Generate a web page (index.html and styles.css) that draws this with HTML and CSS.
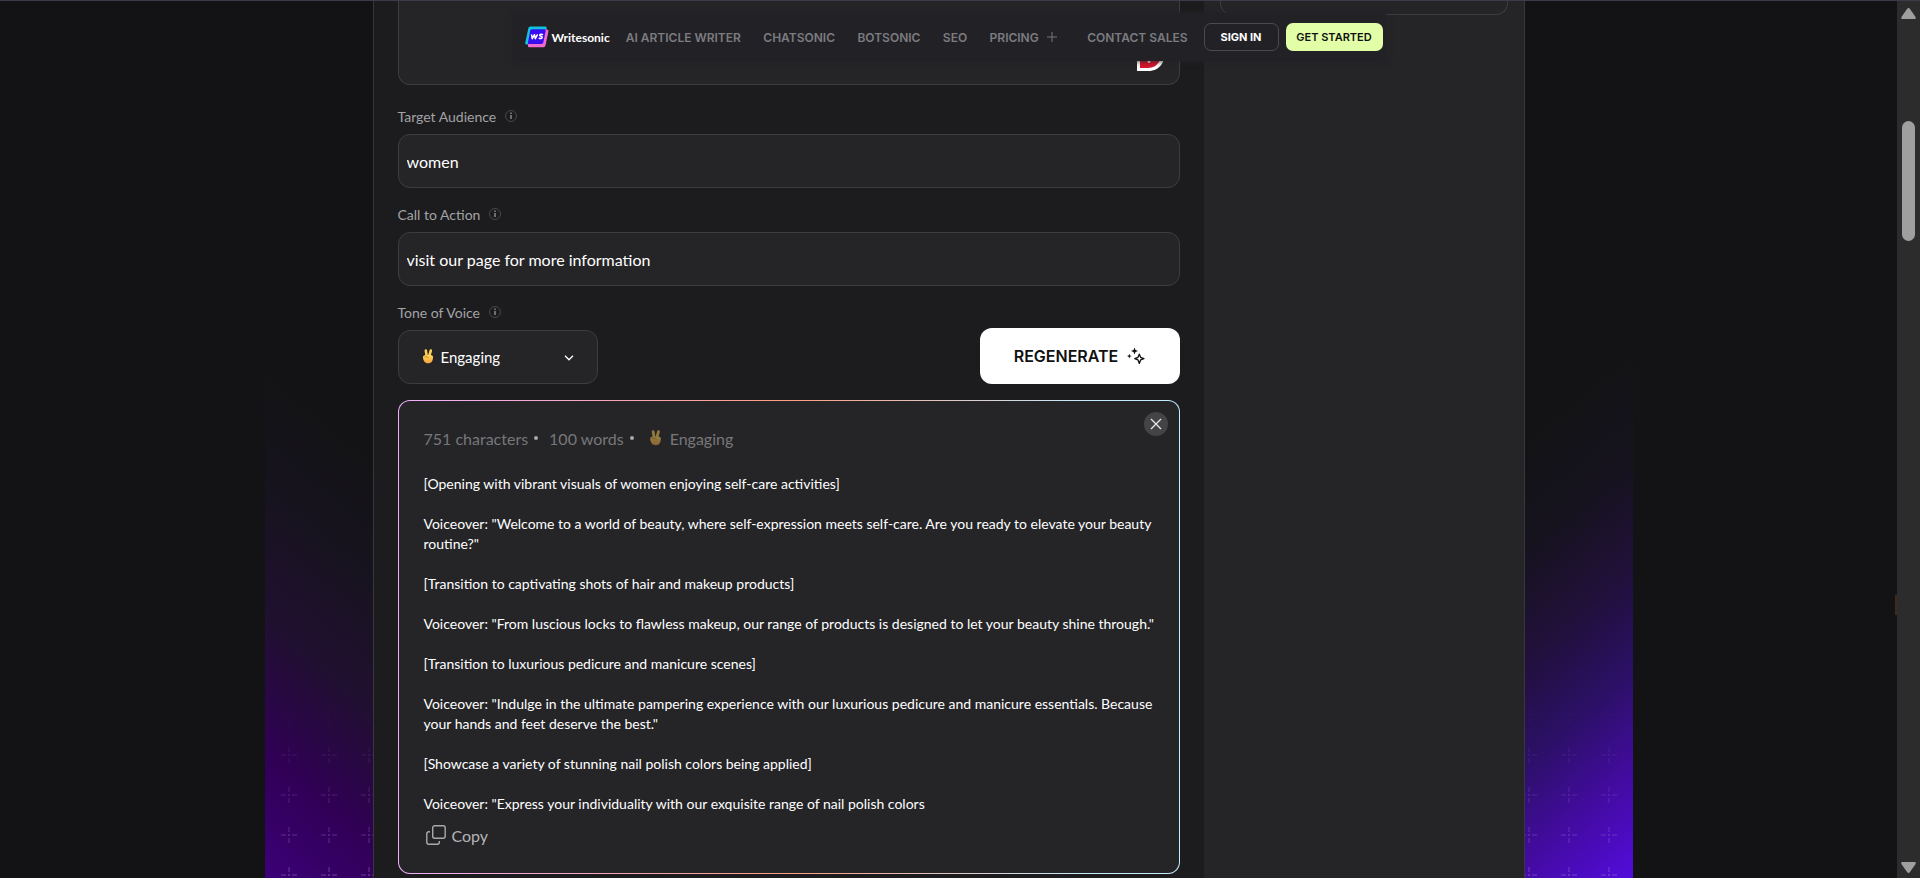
FILE: index.html
```html
<!DOCTYPE html>
<html lang="en">
<head>
<meta charset="utf-8">
<meta name="viewport" content="width=device-width, initial-scale=1">
<title>Writesonic</title>
<link rel="stylesheet" href="styles.css">
</head>
<body>
<svg class="defs" width="0" height="0" aria-hidden="true">
  <defs>
    <linearGradient id="skin" x1="0" y1="0" x2="0" y2="1"><stop offset="0" stop-color="#ffdc5c"/><stop offset="1" stop-color="#f7a03c"/></linearGradient>
    <symbol id="victory" viewBox="0 0 12 15">
      <path d="M3.800 1.600 4.800 7.400M8.800 1.600 7.200 7.400" stroke="#ffcf55" stroke-width="2.600" stroke-linecap="round" fill="none"/>
      <path d="M1 8.500C.8 7 2 6 3.200 6.300H9.500c1.300.2 1.700 1.400 1.500 2.700-.3 2.800-1.400 5.300-4.600 5.300C3 14.300 1.300 12 1 8.500Z" fill="url(#skin)"/>
      <path d="M2 8.300c1.500-.9 3.600-.6 5 .7M4.200 6.800l.6 1.500" stroke="#d27f22" stroke-width=".7" fill="none"/>
    </symbol>
    <symbol id="info" viewBox="0 0 12 12">
      <circle cx="6" cy="6" r="5.500" fill="none" stroke="#48484b"/>
      <path d="M6 5v4M6 2.600v1.300" stroke="#a5a5a8" stroke-width="1.200"/>
    </symbol>
  </defs>
</svg>
<div class="window">
  <div class="viewport">
    <header class="nav">
      <a class="brand" href="#">
        <svg width="24" height="22" viewBox="0 0 24 22" aria-hidden="true">
          <path d="M5.200.5H20a1.600 1.600 0 0 1 1.600 2L18 15 2.500 18.500H1.800A1.600 1.600 0 0 1 .3 16.500L3.400 2A2 2 0 0 1 5.200.5Z" fill="#0fc4dc"/>
          <path d="M20 3.500h1.800A1.600 1.600 0 0 1 23.400 5.500l-3 14.200a2 2 0 0 1-1.900 1.500H4.300A1.500 1.500 0 0 1 3 19.200L3.500 17Z" fill="#f06ad0"/>
          <path d="M6.800 3.200H19.500a1.200 1.200 0 0 1 1.200 1.500L18.300 16.600a1.800 1.800 0 0 1-1.700 1.400H4.200A1.200 1.200 0 0 1 3 16.500L5.200 4.600A1.700 1.700 0 0 1 6.800 3.200Z" fill="#3a0cf0"/>
          <path d="m6.500 8.400.8 4.300 2.200-4 .8 4 2.300-4.300M18 8.800c-1.300-.8-3.300-.6-3.300.5 0 1.200 2.700.7 2.500 2.100-.2 1.300-2.200 1.400-3.400.4" fill="none" stroke="#fff" stroke-width="1.500" stroke-linejoin="round"/>
        </svg>
        <span>Writesonic</span>
      </a>
      <nav class="links">
        <a href="#">AI ARTICLE WRITER</a>
        <a href="#">CHATSONIC</a>
        <a href="#">BOTSONIC</a>
        <a href="#">SEO</a>
        <a class="pricing" href="#">PRICING
          <svg width="10" height="10" viewBox="0 0 10 10" aria-hidden="true"><path d="M5 0v10M0 5h10" stroke="#77777b"/></svg>
        </a>
        <a href="#">CONTACT SALES</a>
      </nav>
      <button class="sign-in" type="button">SIGN IN</button>
      <button class="get-started" type="button">GET STARTED</button>
    </header>

    <div class="band">
      <svg class="crosses" width="100%" height="100%" aria-hidden="true">
        <defs>
          <pattern id="cross" width="40" height="40" x="4" y="14" patternUnits="userSpaceOnUse">
            <path d="M20 12v5M20 19v2M20 23v5M12 20h5M19 20h2M23 20h5" stroke="#b58ae0" stroke-width="1"/>
          </pattern>
          <linearGradient id="fade" x1="0" y1="0" x2="0" y2="1"><stop offset=".8" stop-color="#fff" stop-opacity="0"/><stop offset="1" stop-color="#fff" stop-opacity=".42"/></linearGradient>
          <mask id="fademask"><rect width="100%" height="100%" fill="url(#fade)"/></mask>
        </defs>
        <rect width="100%" height="100%" fill="url(#cross)" mask="url(#fademask)"/>
      </svg>
      <div class="panel">
        <main class="tool">
          <div class="card-end description-card">
            <svg width="32" height="26" viewBox="0 0 32 26" aria-hidden="true">
              <path d="M1 0h30c-2 15-6 25-19 25H1Z" fill="#fff"/><path d="M4 0h24c-2 13-6 22-16 22H4Z" fill="#d8142c"/><path d="M11 14c1 4 3 4 4 0Z" fill="#fff"/>
            </svg>
          </div>

          <div class="field">
            <div class="label-row"><label for="audience">Target Audience</label><svg width="12" height="12" aria-hidden="true"><use href="#info"/></svg></div>
            <input id="audience" class="text-input" type="text" value="women">
          </div>
          <div class="field">
            <div class="label-row"><label for="cta">Call to Action</label><svg width="12" height="12" aria-hidden="true"><use href="#info"/></svg></div>
            <input id="cta" class="text-input" type="text" value="visit our page for more information">
          </div>
          <div class="actions">
            <div class="field tone">
              <div class="label-row"><label for="tone">Tone of Voice</label><svg width="12" height="12" aria-hidden="true"><use href="#info"/></svg></div>
              <div class="select-wrap">
                <svg class="hand" width="12" height="15" aria-hidden="true"><use href="#victory"/></svg>
                <select id="tone"><option>Engaging</option></select>
                <svg class="chevron" width="10" height="6" viewBox="0 0 10 6" aria-hidden="true"><path d="m1 .8 4 4 4-4" fill="none" stroke="#fff" stroke-width="1.300"/></svg>
              </div>
            </div>
            <button class="regenerate" type="button">REGENERATE
              <svg width="18" height="18" viewBox="0 0 18 18" aria-hidden="true">
                <path d="M7.500.6 8.500 3l2.500 1-2.500 1-1 2.500-1-2.500L4 4l2.500-1Z" fill="#111"/>
                <path d="m2.300 6.800.7 1.600 1.700.7-1.700.7-.7 1.600-.7-1.600L0 9.100l1.600-.7Z" fill="#111"/>
                <path d="m12.300 7.200 1.300 3.100 3.300 1.300-3.300 1.300-1.300 3.500-1.300-3.500-3.300-1.300L11 10.300Z" fill="none" stroke="#111" stroke-width="1.300" stroke-linejoin="round"/>
              </svg>
            </button>
          </div>

          <section class="output">
            <button class="close" type="button" aria-label="Close"><svg width="12" height="12" viewBox="0 0 12 12" aria-hidden="true"><path d="m1 1 10 10M11 1 1 11" stroke="#e8e8ea" stroke-width="1.300"/></svg></button>
            <div class="meta">
              <span>751 characters</span><i class="dot"></i>
              <span>100 words</span><i class="dot"></i>
              <svg class="meta-hand" width="13" height="16" aria-hidden="true"><use href="#victory"/></svg>
              <span>Engaging</span>
            </div>
            <div class="script">
              <p>[Opening with vibrant visuals of women enjoying self-care activities]</p>
              <p>Voiceover: "Welcome to a world of beauty, where self-expression meets self-care. Are you ready to elevate your beauty routine?"</p>
              <p>[Transition to captivating shots of hair and makeup products]</p>
              <p>Voiceover: "From luscious locks to flawless makeup, our range of products is designed to let your beauty shine through."</p>
              <p>[Transition to luxurious pedicure and manicure scenes]</p>
              <p>Voiceover: "Indulge in the ultimate pampering experience with our luxurious pedicure and manicure essentials. Because your hands and feet deserve the best."</p>
              <p>[Showcase a variety of stunning nail polish colors being applied]</p>
              <p>Voiceover: "Express your individuality with our exquisite range of nail polish colors</p>
            </div>
            <button class="copy" type="button">
              <svg width="20" height="20" viewBox="0 0 20 20" fill="none" stroke="#aaaaad" stroke-width="1.400" aria-hidden="true"><rect x="6.700" y=".8" width="12.500" height="12.500" rx="2"/><path d="M4 6.700H2.800a2 2 0 0 0-2 2v8.500a2 2 0 0 0 2 2h8.500a2 2 0 0 0 2-2V16"/></svg>
              Copy
            </button>
          </section>
        </main>
        <aside class="side"><div class="card-end side-card"></div></aside>
      </div>
    </div>
    <span class="edge-mark"></span>
  </div>

  <div class="scrollbar" aria-hidden="true">
    <svg width="15" height="11" viewBox="0 0 15 11"><path d="M1.500 11Q-.6 11 .6 8.800L6 1Q7.500-.8 9 1l5.400 7.800Q15.600 11 13.500 11Z" fill="#9f9f9f"/></svg>
    <span class="thumb"></span>
    <svg class="down" width="15" height="11" viewBox="0 0 15 11"><path d="M1.500 0Q-.6 0 .6 2.200L6 10q1.500 1.800 3 0l5.400-7.800Q15.600 0 13.500 0Z" fill="#9f9f9f"/></svg>
  </div>
</div>
</body>
</html>
```

FILE: styles.css
```css
* { box-sizing: border-box; }

body {
  margin: 0;
  background: #131315;
  color: #fff;
  font-family: Lato, "Liberation Sans", sans-serif;
}

button, input, select { font-family: inherit; color: inherit; }
a { color: inherit; text-decoration: none; }
svg { flex: none; }
.defs { position: absolute; }

.window {
  display: flex;
  height: 100vh;
  overflow: hidden;
  border-top: 1px solid #3b3b4c;
}

.viewport { position: relative; flex: 1; min-width: 0; overflow: hidden; }

/* Floating navigation */
.nav {
  position: absolute;
  z-index: 2;
  top: 12px;
  left: 50%;
  transform: translateX(-50%);
  display: flex;
  align-items: center;
  width: 872px;
  height: 48px;
  padding: 0 2px 0 12px;
  background: #222226;
  box-shadow: 0 0 6px #222226;
  white-space: nowrap;
}
.brand { display: flex; align-items: center; gap: 3px; font-size: 12px; font-weight: 700; }
.links {
  display: flex;
  flex: 1;
  justify-content: space-between;
  margin: 0 16px;
  font-family: Inter, sans-serif;
  font-size: 12px;
  font-weight: 600;
  color: #7c7c80;
}
.pricing { display: flex; align-items: center; gap: 8px; margin-right: 8px; }
.sign-in, .get-started {
  height: 28px;
  padding: 0;
  border-radius: 7px;
  font-family: Inter, sans-serif;
  font-size: 11px;
  font-weight: 700;
}
.sign-in { width: 75px; margin-right: 7px; background: #222226; border: 1px solid #4a4a50; }
.get-started { width: 97px; background: #e2ffa8; border: 0; color: #111; font-weight: 600; }

/* Background band with coloured sides */
.band {
  position: relative;
  max-width: 1368px;
  min-height: 100%;
  margin: 0 auto;
  background:
    linear-gradient(220deg, #13131500 48%, #17131f 60%, #201030 73%, #300055 87%, #3c0078) left / 112px 100% no-repeat,
    linear-gradient(140deg, #13131500 46%, #16131f 57%, #21103a 68%, #2c1068 79%, #430ba0 89%, #520cdc) right / 112px 100% no-repeat;
}
.crosses { position: absolute; inset: 0; }

.panel {
  position: relative;
  display: grid;
  grid-template-columns: 1fr 320px;
  max-width: 1152px;
  min-height: calc(100vh - 1px);
  margin: 0 auto;
  background: #1c1c1e;
  border: solid #38383c;
  border-width: 0 1px;
}
.tool { padding: 0 24px 4px; min-width: 0; }
.side { padding: 0 16px; background: #252528; }

.card-end {
  border: 1px solid #3d3d40;
  border-top: 0;
  border-radius: 0 0 12px 12px;
  background: #252528;
}
.side-card { height: 14px; }
.description-card {
  display: flex;
  justify-content: flex-end;
  align-items: flex-end;
  height: 84px;
  margin-bottom: 21px;
  padding: 0 11px 12px;
}

/* Form */
.field { margin-bottom: 16px; }
.label-row {
  display: flex;
  align-items: center;
  gap: 9px;
  height: 20px;
  margin-bottom: 8px;
  font-size: 14px;
  color: #a3a3a6;
}
.text-input, .select-wrap {
  display: block;
  width: 100%;
  height: 54px;
  border: 1px solid #3d3d40;
  border-radius: 12px;
  background: #252528;
}
.text-input { padding: 0 8px; font-size: 16px; outline: 0; }
.actions { display: flex; justify-content: space-between; align-items: flex-end; }
.tone { width: 200px; margin: 0; }
.select-wrap { position: relative; }
.select-wrap select {
  width: 100%;
  height: 100%;
  padding: 0 42px;
  appearance: none;
  border: 0;
  background: none;
  font-size: 15px;
}
.hand { position: absolute; left: 23px; top: 18px; }
.chevron { position: absolute; right: 23px; top: 24px; pointer-events: none; }
.regenerate {
  display: flex;
  align-items: center;
  justify-content: center;
  gap: 9px;
  width: 200px;
  height: 56px;
  padding: 0;
  border: 0;
  border-radius: 12px;
  background: #fff;
  color: #111;
  font-family: Inter, sans-serif;
  font-size: 16px;
  font-weight: 600;
}

/* Generated text */
.output {
  position: relative;
  margin-top: 16px;
  padding: 25px 22px 22px 25px;
  border: 1px solid transparent;
  border-radius: 12px;
  background:
    linear-gradient(#252528, #252528) padding-box,
    linear-gradient(90deg, #f0b0ff, #ff9d80 50%, #c4ecff 88%) border-box;
}
.close {
  position: absolute;
  top: 11px;
  right: 11px;
  display: grid;
  place-items: center;
  width: 24px;
  height: 24px;
  padding: 0;
  border: 0;
  border-radius: 50%;
  background: #444447;
}
.meta { display: flex; align-items: center; height: 24px; font-size: 16px; color: #77777a; }
.dot { width: 4px; height: 4px; margin: 0 11px 0 6px; border-radius: 50%; background: #a8a8aa; }
.meta-hand { margin: 0 8px 0 4px; opacity: .5; }
.script { margin-top: 24px; font-size: 14px; line-height: 20px; }
.script p { margin: 0 0 20px; }
.script p:last-child { margin: 0; }
.copy {
  display: flex;
  align-items: center;
  gap: 6px;
  height: 32px;
  margin-top: 5px;
  padding: 0 2px;
  border: 0;
  background: none;
  color: #b4b4b6;
  font-size: 16px;
}

.edge-mark { position: absolute; right: 0; top: 594px; width: 2px; height: 20px; background: #3d2a1c; }

/* Window scrollbar */
.scrollbar {
  display: flex;
  flex-direction: column;
  align-items: center;
  width: 23px;
  padding: 7px 0 5px;
  background: #2c2c2c;
}
.thumb { width: 13px; height: 120px; margin-top: 102px; border-radius: 7px; background: #9f9f9f; }
.down { margin-top: auto; }
```
